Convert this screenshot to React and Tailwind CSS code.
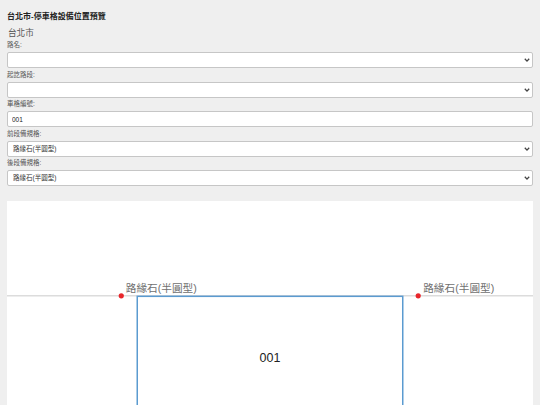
import React, { useState } from "react";

const font = { fontFamily: '"Liberation Sans", "Noto Sans CJK TC", sans-serif' };

const Chevron = () => (
  <svg className="pointer-events-none absolute right-[3px] top-1/2 h-[5px] w-[6px] -translate-y-1/2" viewBox="0 0 6 5">
    <path d="M0.8 1.2 L3 3.6 L5.2 1.2" fill="none" stroke="#444" strokeWidth="1.3" />
  </svg>
);

const Field = ({ label, children }) => (
  <div className="mb-[0.5px] flex flex-col gap-[2px]">
    <label className="h-[11px] text-[6.5px] leading-[11px] text-[#555]">{label}</label>
    {children}
  </div>
);

const SelectBox = ({ value, options }) => (
  <div className="relative">
    <select
      defaultValue={value}
      className="block h-[16px] w-full appearance-none rounded-[2px] border border-[#c6c6c6] bg-white pl-[5px] text-[6.5px] text-[#333] outline-none"
    >
      {options.map((o) => (
        <option key={o}>{o}</option>
      ))}
    </select>
    <Chevron />
  </div>
);

const App = () => {
  const [code, setCode] = useState("001");
  const spec = "路緣石(半圓型)";

  return (
    <div className="flex h-[405px] flex-col overflow-hidden bg-[#efefef] px-[7px] pt-[12px]" style={font}>
      <h1 className="h-[10px] text-[8px] font-bold leading-[10px] text-[#222]">台北市-停車格設備位置預覽</h1>
      <div className="mt-[6px] h-[11px] pl-[1px] text-[8.6px] leading-[10px] text-[#555]">台北市</div>

      <Field label="路名:">
        <SelectBox value="" options={[""]} />
      </Field>
      <Field label="起訖路段:">
        <SelectBox value="" options={[""]} />
      </Field>
      <Field label="車格編號:">
        <input
          className="block h-[16px] w-full rounded-[2px] border border-[#c6c6c6] bg-white pl-[4px] text-[6.5px] text-[#222] outline-none"
          type="text"
          value={code}
          onChange={(e) => setCode(e.target.value)}
        />
      </Field>
      <Field label="前段備規格:">
        <SelectBox value={spec} options={[spec]} />
      </Field>
      <Field label="後段備規格:">
        <SelectBox value={spec} options={[spec]} />
      </Field>

      <div className="mt-[14px] flex-1 bg-white">
        <svg className="block h-full w-full" viewBox="0 0 527 204" preserveAspectRatio="xMinYMin meet">
          <line x1="0" y1="95" x2="527" y2="95" stroke="#dcdcdc" strokeWidth="1.5" />
          <rect x="130.5" y="95.5" width="266" height="140" fill="none" stroke="#5b9bd0" strokeWidth="1.5" />
          <circle cx="114.5" cy="95" r="2.6" fill="#e8262b" />
          <circle cx="412" cy="95" r="2.6" fill="#e8262b" />
          <text x="119" y="91" fontSize="10.7" fill="#707070">{spec}</text>
          <text x="417" y="91" fontSize="10.7" fill="#707070">{spec}</text>
          <text x="263.5" y="161" fontSize="12.5" fill="#222" textAnchor="middle">{code}</text>
        </svg>
      </div>
    </div>
  );
};

export default App;
